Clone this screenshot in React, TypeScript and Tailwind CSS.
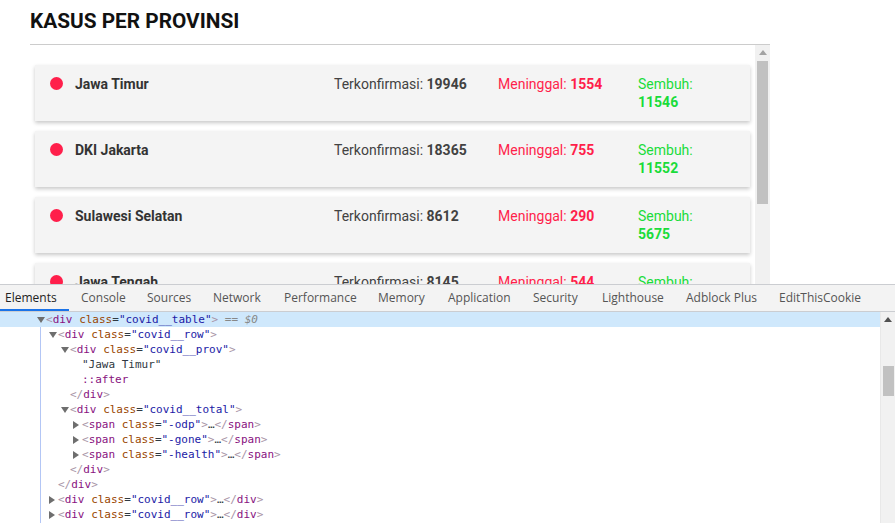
import React from "react";

const rows = [
  { name: "Jawa Timur", odp: "19946", gone: "1554", health: "11546" },
  { name: "DKI Jakarta", odp: "18365", gone: "755", health: "11552" },
  { name: "Sulawesi Selatan", odp: "8612", gone: "290", health: "5675" },
  { name: "Jawa Tengah", odp: "8145", gone: "544", health: "5102" },
];

const tabs = [
  { t: "Elements", w: "w-[76px]" },
  { t: "Console", w: "w-[66px]" },
  { t: "Sources", w: "w-[66px]" },
  { t: "Network", w: "w-[71px]" },
  { t: "Performance", w: "w-[94px]" },
  { t: "Memory", w: "w-[70px]" },
  { t: "Application", w: "w-[85px]" },
  { t: "Security", w: "w-[69px]" },
  { t: "Lighthouse", w: "w-[84px]" },
  { t: "Adblock Plus", w: "w-[93px]" },
  { t: "EditThisCookie", w: "w-[110px]" },
];

function Arrow({ open }: { open: boolean }) {
  return (
    <span className="inline-flex w-[9px] shrink-0 items-center">
      {open ? (
        <svg width="8" height="6" viewBox="0 0 8 6">
          <path d="M0 0 L8 0 L4 6 Z" fill="#6e6e6e" />
        </svg>
      ) : (
        <svg width="6" height="8" viewBox="0 0 6 8">
          <path d="M0 0 L6 4 L0 8 Z" fill="#6e6e6e" />
        </svg>
      )}
    </span>
  );
}

const P = ({ c }: { c: string }) => <span className="text-[#a894a6]">{c}</span>;
const Tag = ({ c }: { c: string }) => <span className="text-[#881280]">{c}</span>;
const An = ({ c }: { c: string }) => <span className="text-[#994500]">{c}</span>;
const Av = ({ c }: { c: string }) => <span className="text-[#1a1aa6]">{c}</span>;

function Open({ tag, cls }: { tag: string; cls: string }) {
  return (
    <>
      <P c="<" />
      <Tag c={tag} /> <An c="class" />
      <span className="text-[#303942]">=</span>
      <Av c={`"${cls}"`} />
      <P c=">" />
    </>
  );
}
function Close({ tag }: { tag: string }) {
  return (
    <>
      <P c="</" />
      <Tag c={tag} />
      <P c=">" />
    </>
  );
}
const Dots = () => <span className="text-[#303942]">…</span>;

type Line = { lvl: number; arrow?: "open" | "closed"; content: React.ReactNode; sel?: boolean };

const lines: Line[] = [
  {
    lvl: 0,
    arrow: "open",
    sel: true,
    content: (
      <>
        <Open tag="div" cls="covid__table" />
        <span className="italic text-[#888]"> == $0</span>
      </>
    ),
  },
  { lvl: 1, arrow: "open", content: <Open tag="div" cls="covid__row" /> },
  { lvl: 2, arrow: "open", content: <Open tag="div" cls="covid__prov" /> },
  { lvl: 3, content: <span className="text-[#303942]">"Jawa Timur"</span> },
  { lvl: 3, content: <span className="text-[#881280]">::after</span> },
  { lvl: 2, content: <Close tag="div" /> },
  { lvl: 2, arrow: "open", content: <Open tag="div" cls="covid__total" /> },
  { lvl: 3, arrow: "closed", content: (<><Open tag="span" cls="-odp" /><Dots /><Close tag="span" /></>) },
  { lvl: 3, arrow: "closed", content: (<><Open tag="span" cls="-gone" /><Dots /><Close tag="span" /></>) },
  { lvl: 3, arrow: "closed", content: (<><Open tag="span" cls="-health" /><Dots /><Close tag="span" /></>) },
  { lvl: 2, content: <Close tag="div" /> },
  { lvl: 1, content: <Close tag="div" /> },
  { lvl: 1, arrow: "closed", content: (<><Open tag="div" cls="covid__row" /><Dots /><Close tag="div" /></>) },
  { lvl: 1, arrow: "closed", content: (<><Open tag="div" cls="covid__row" /><Dots /><Close tag="div" /></>) },
];

const lvlPad = ["pl-[37px]", "pl-[49px]", "pl-[61px]", "pl-[73px]"];

export default function App() {
  return (
    <div className="relative flex h-[523px] w-[895px] flex-col overflow-hidden bg-white">
      {/* page */}
      <div className="h-[284px] shrink-0 overflow-hidden pl-[30px] font-['Roboto',sans-serif]">
        <div className="w-[740px]">
          <h2 className="border-b border-[#cccccc] pb-[7px] pt-[6px] text-[20.8px] font-bold leading-[31px] text-[#111]">
            KASUS PER PROVINSI
          </h2>
          <div className="flex h-[239px]">
            <div className="flex w-[725px] flex-col gap-[10px] px-[5px] pt-[20px]">
              {rows.map((r) => (
                <div
                  key={r.name}
                  className="flex h-[56px] shrink-0 items-start bg-[#f4f4f4] px-[15px] py-[10px] text-[14px] leading-[18px] shadow-[0_2px_4px_rgba(0,0,0,0.22)]"
                >
                  <div className="mt-[2px] h-[13px] w-[13px] shrink-0 rounded-full bg-[#ff1f4b]" />
                  <div className="ml-[12px] flex-1 font-bold text-[#333]">{r.name}</div>
                  <div className="flex">
                    <span className="w-[164px] text-[#424242]">
                      Terkonfirmasi: <b>{r.odp}</b>
                    </span>
                    <span className="w-[140px] text-[#ff1f4b]">
                      Meninggal: <b>{r.gone}</b>
                    </span>
                    <span className="w-[97px] text-[#1adc3a]">
                      Sembuh:
                      <br />
                      <b>{r.health}</b>
                    </span>
                  </div>
                </div>
              ))}
            </div>
            <div className="flex w-[15px] flex-col items-center bg-[#f1f1f1]">
              <svg width="8" height="5" viewBox="0 0 8 5" className="mt-[5px]">
                <path d="M0 5 L4 0 L8 5 Z" fill="#a3a3a3" />
              </svg>
              <div className="mt-[6px] h-[143px] w-[11px] bg-[#c1c1c1]" />
            </div>
          </div>
        </div>
      </div>

      {/* devtools */}
      <div className="flex flex-1 flex-col border-t border-[#cbcdd1]">
        <div className="flex h-[27px] shrink-0 border-b border-[#cbcdd1] bg-[#f3f3f3] font-['Open_Sans',sans-serif] text-[12px]">
          {tabs.map((t, i) => (
            <div key={t.t} className={`relative flex ${t.w} shrink-0 items-center whitespace-nowrap pl-[5px] ${i === 0 ? "text-[#222]" : "text-[#555]"}`}>
              {t.t}
              {i === 0 && <div className="absolute bottom-0 left-0 h-[2px] w-[69px] bg-[#1a73e8]" />}
            </div>
          ))}
        </div>
        <div className="flex flex-1 overflow-hidden">
          <div className="relative flex-1 font-['DejaVu_Sans_Mono',monospace] text-[11px] leading-[15px]">
            <div className="absolute bottom-0 left-[40px] top-[15px] w-[1px] bg-[#b3c6f5]" />
            {lines.map((l, i) => (
              <div
                key={i}
                className={`flex h-[15px] items-center whitespace-pre ${lvlPad[l.lvl]} ${l.sel ? "bg-[#cfe8fc]" : ""}`}
              >
                {l.arrow ? <Arrow open={l.arrow === "open"} /> : <span className="w-[9px] shrink-0" />}
                <span>{l.content}</span>
              </div>
            ))}
          </div>
          <div className="flex w-[15px] flex-col items-center border-l border-[#e8e8e8] bg-[#f1f1f1]">
            <svg width="8" height="5" viewBox="0 0 8 5" className="mt-[5px]">
              <path d="M0 5 L4 0 L8 5 Z" fill="#505050" />
            </svg>
            <div className="mt-[44px] h-[30px] w-[11px] bg-[#c1c1c1]" />
          </div>
        </div>
      </div>
    </div>
  );
}
